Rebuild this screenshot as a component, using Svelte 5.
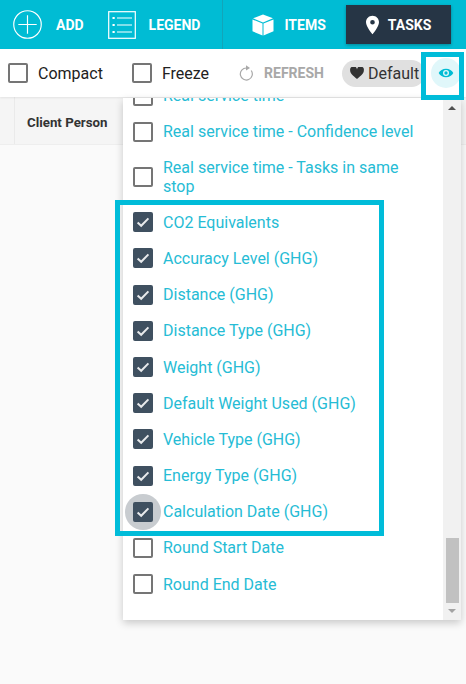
<script lang="ts">
	type Row = { label: string; checked?: boolean };

	const before: Row[] = [
		{ label: 'Real service time' },
		{ label: 'Real service time - Confidence level' },
		{ label: 'Real service time - Tasks in same stop' }
	];
	const ghg: Row[] = [
		{ label: 'CO2 Equivalents', checked: true },
		{ label: 'Accuracy Level (GHG)', checked: true },
		{ label: 'Distance (GHG)', checked: true },
		{ label: 'Distance Type (GHG)', checked: true },
		{ label: 'Weight (GHG)', checked: true },
		{ label: 'Default Weight Used (GHG)', checked: true },
		{ label: 'Vehicle Type (GHG)', checked: true },
		{ label: 'Energy Type (GHG)', checked: true },
		{ label: 'Calculation Date (GHG)', checked: true }
	];
	const after: Row[] = [{ label: 'Round Start Date' }, { label: 'Round End Date' }];
</script>

{#snippet row(item: Row)}
	<div class="row">
		<span class="box" class:checked={item.checked} class:ripple={item.label.startsWith('Calculation')}>
			{#if item.checked}
				<svg viewBox="0 0 20 20" aria-hidden="true"><path d="M4.600 10.400l3.600 3.400 7.200-7.400" /></svg>
			{/if}
		</span>
		<span class="row-label">{item.label}</span>
	</div>
{/snippet}

<div class="page">
	<header class="topbar">
		<button type="button" class="nav nav-add">
			<svg class="ic-add" viewBox="0 0 32 32" aria-hidden="true">
				<circle cx="16" cy="16" r="14.2" />
				<path d="M16 6.500v19M6.500 16h19" />
			</svg>
			ADD
		</button>
		<button type="button" class="nav nav-legend">
			<svg class="ic-legend" viewBox="0 0 28 28" aria-hidden="true">
				<rect x="0.7" y="0.7" width="26.6" height="26.6" />
				<path d="M9 7h15M9 14h15M9 21h15" />
				<path class="dots" d="M4.500 7h2.200M4.500 14h2.200M4.500 21h2.200" />
			</svg>
			LEGEND
		</button>
		<span class="divider"></span>
		<button type="button" class="nav nav-items">
			<svg class="ic-cube" viewBox="0 0 22 22" aria-hidden="true">
				<path d="M11 0.500l10 3.800L11 8.400 1 4.300z" />
				<path d="M0.500 5.500l10 4v12L0.500 17.300z" />
				<path d="M21.500 5.500l-10 4v12l10-4.200z" />
			</svg>
			ITEMS
		</button>
		<button type="button" class="nav nav-tasks">
			<svg class="ic-pin" viewBox="0 0 14 20" aria-hidden="true">
				<path
					fill-rule="evenodd"
					d="M7 0C3.100 0 0 3.100 0 7c0 5 7 13 7 13s7-8 7-13c0-3.900-3.100-7-7-7zm0 9.500A2.500 2.500 0 1 1 7 4.500a2.500 2.500 0 0 1 0 5z"
				/>
			</svg>
			TASKS
		</button>
	</header>

	<div class="toolbar">
		<label class="check-label compact"><span class="box"></span>Compact</label>
		<label class="check-label freeze"><span class="box"></span>Freeze</label>
		<button type="button" class="refresh">
			<svg viewBox="0 0 16 16" aria-hidden="true">
				<path class="arc" d="M8.500 3A6 6 0 1 0 13.200 5.500" />
				<path class="tip" d="M8 0.300L12 3 8 5.600z" />
			</svg>
			REFRESH
		</button>
		<div class="chip">
			<svg viewBox="0 0 16 14" aria-hidden="true">
				<path d="M8 14C3 9.800 0 7.200 0 4a4 4 0 0 1 8-1.200A4 4 0 0 1 16 4c0 3.200-3 5.800-8 10z" />
			</svg>
			Default
		</div>
		<button type="button" class="eye" aria-label="Columns">
			<svg viewBox="0 0 24 24" aria-hidden="true">
				<path
					fill-rule="evenodd"
					d="M12 5.500C7 5.500 3 8.200 1 12c2 3.800 6 6.500 11 6.500s9-2.700 11-6.500c-2-3.800-6-6.500-11-6.500zM12 16.500a4.500 4.500 0 1 1 0-9 4.500 4.500 0 0 1 0 9zM12 14.500a2.500 2.500 0 1 0 0-5 2.500 2.500 0 0 0 0 5z"
				/>
			</svg>
		</button>
	</div>

	<div class="table-head">
		<div class="cell-spacer"></div>
		<div class="cell">Client Person</div>
	</div>

	<div class="menu">
		<div class="list">
			{#each before as item}
				{@render row(item)}
			{/each}
			{#each ghg as item}
				{@render row(item)}
			{/each}
			{#each after as item}
				{@render row(item)}
			{/each}
		</div>
		<div class="scrollbar">
			<span class="arrow up"></span>
			<span class="thumb"></span>
			<span class="arrow down"></span>
		</div>
	</div>

	<!-- annotation frames drawn over the screenshot -->
	<div class="frame frame-eye"></div>
	<div class="frame frame-ghg"></div>
</div>

<style>
	:global(body) {
		margin: 0;
		background: #fafafa;
	}

	.page {
		position: relative;
		width: 466px;
		height: 684px;
		overflow: hidden;
		background: #fafafa;
		font-family: Roboto, 'Liberation Sans', sans-serif;
	}

	button {
		font-family: inherit;
		border: none;
		background: none;
		padding: 0;
	}

	.topbar {
		display: flex;
		align-items: center;
		height: 49px;
		background: #00bcd4;
	}

	.nav {
		display: flex;
		align-items: center;
		color: #fff;
		font-size: 14px;
		font-weight: 700;
	}

	.nav-add {
		gap: 13px;
		margin-left: 12px;
	}

	.ic-add {
		width: 31px;
		height: 31px;
		fill: none;
		stroke: #fff;
		stroke-width: 1.2;
	}

	.nav-legend {
		gap: 13px;
		margin-left: 24px;
	}

	.ic-legend {
		width: 28px;
		height: 28px;
		fill: none;
		stroke: #fff;
		stroke-width: 1.2;
	}

	.ic-legend .dots {
		stroke-width: 2;
	}

	.divider {
		width: 1px;
		height: 49px;
		margin-left: 22px;
		background: #12a5b9;
	}

	.nav-items {
		gap: 10px;
		margin-left: 29px;
	}

	.ic-cube {
		width: 22px;
		height: 22px;
		fill: #fff;
	}

	.nav-tasks {
		gap: 9px;
		width: 105px;
		height: 39px;
		margin-left: 20px;
		padding-left: 20px;
		background: #263545;
		box-shadow: 0 1px 3px rgba(0, 0, 0, 0.3);
	}

	.ic-pin {
		width: 13px;
		height: 20px;
		fill: #fff;
	}

	.toolbar {
		display: flex;
		align-items: center;
		height: 48px;
		background: #fff;
		box-shadow: 0 1px 2px rgba(0, 0, 0, 0.08);
		position: relative;
		z-index: 1;
	}

	.check-label {
		display: flex;
		align-items: center;
		gap: 10px;
		font-size: 16px;
		color: #212121;
	}

	.compact {
		margin-left: 8px;
	}

	.freeze {
		margin-left: 29px;
	}

	.box {
		position: relative;
		flex: none;
		width: 20px;
		height: 20px;
		box-sizing: border-box;
		border: 2px solid #757575;
		border-radius: 2px;
		background: #fff;
	}

	.box.checked {
		border-color: #3f5060;
		background: #3f5060;
	}

	.box svg {
		position: absolute;
		left: -2px;
		top: -2px;
		width: 20px;
		height: 20px;
		fill: none;
		stroke: #e8eaec;
		stroke-width: 2;
	}

	.box.ripple::before {
		content: '';
		position: absolute;
		left: -10px;
		top: -10px;
		width: 36px;
		height: 36px;
		border-radius: 50%;
		background: #c8ccd0;
		z-index: -1;
	}

	.refresh {
		display: flex;
		align-items: center;
		gap: 10px;
		margin-left: 29px;
		color: #a8a8a8;
		font-size: 14px;
		font-weight: 700;
	}

	.refresh svg {
		width: 16px;
		height: 16px;
		fill: none;
	}

	.refresh .arc {
		stroke: #a8a8a8;
		stroke-width: 1.2;
	}

	.refresh .tip {
		fill: #a8a8a8;
	}

	.chip {
		display: flex;
		align-items: center;
		gap: 4px;
		width: 83px;
		height: 27px;
		box-sizing: border-box;
		margin-left: 18px;
		padding-left: 8px;
		border-radius: 14px;
		background: #e0e0e0;
		font-size: 16px;
		color: #333;
	}

	.chip svg {
		width: 14px;
		height: 12px;
		fill: #333;
	}

	.eye {
		display: flex;
		align-items: center;
		justify-content: center;
		width: 30px;
		height: 30px;
		margin-left: 6px;
		border-radius: 50%;
		background: #e0f7fa;
	}

	.eye svg {
		width: 16px;
		height: 16px;
		fill: #00bcd4;
	}

	.table-head {
		display: flex;
		height: 47px;
		background: #f5f5f5;
		border-bottom: 1px solid #eee;
	}

	.cell-spacer {
		width: 14px;
		border-right: 1px solid #eaeaea;
	}

	.cell {
		padding-left: 12px;
		line-height: 51px;
		font-size: 13.3px;
		font-weight: 700;
		color: #333;
	}

	.menu {
		position: absolute;
		z-index: 2;
		left: 123px;
		top: 98px;
		display: flex;
		width: 338px;
		height: 522px;
		overflow: hidden;
		background: #fff;
		box-shadow: 0 3px 8px rgba(0, 0, 0, 0.2);
	}

	.list {
		flex: 1;
		margin-top: -20.4px;
		isolation: isolate;
	}

	.row {
		display: flex;
		align-items: center;
		gap: 10px;
		padding: 8.1px 28px 8.1px 10px;
		font-size: 16px;
		line-height: 19px;
		color: #26bcd5;
	}

	.scrollbar {
		display: flex;
		flex-direction: column;
		align-items: center;
		width: 18px;
		background: #f1f1f1;
	}

	.arrow {
		width: 0;
		height: 0;
		border-left: 4px solid transparent;
		border-right: 4px solid transparent;
	}

	.arrow.up {
		margin-top: 8px;
		border-bottom: 4px solid #505050;
	}

	.arrow.down {
		margin-top: 6px;
		margin-bottom: 7px;
		border-top: 4px solid #a3a3a3;
	}

	.thumb {
		width: 13px;
		height: 65px;
		margin-top: auto;
		background: #c1c1c1;
	}

	.frame {
		position: absolute;
		z-index: 3;
		box-sizing: border-box;
		border: 5px solid #00bcd9;
		pointer-events: none;
	}

	.frame-eye {
		left: 421px;
		top: 52px;
		width: 43px;
		height: 48px;
	}

	.frame-ghg {
		left: 115px;
		top: 200px;
		width: 269px;
		height: 336px;
	}
</style>
